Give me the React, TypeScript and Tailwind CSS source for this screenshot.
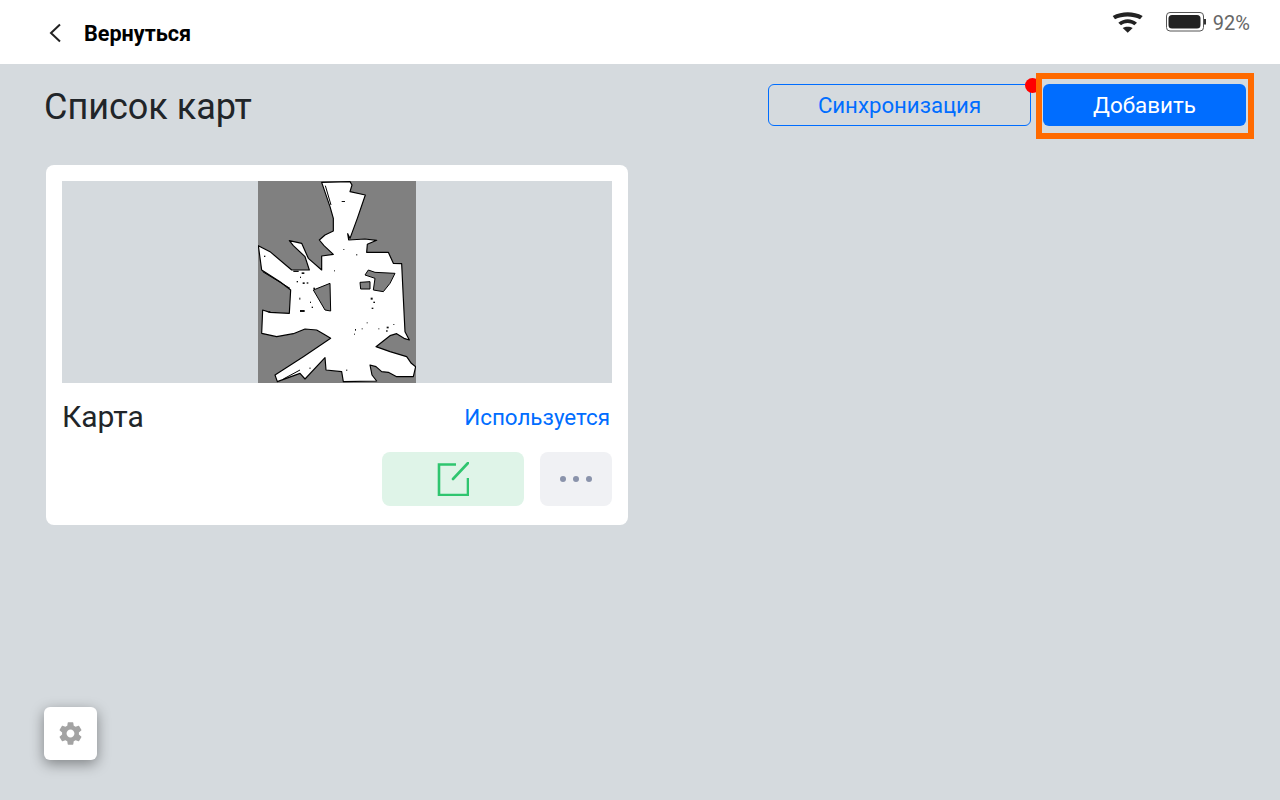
const font = { fontFamily: "Roboto, sans-serif" };

function WifiIcon() {
  return (
    <svg width="32" height="22" viewBox="0 0 32 22" fill="#222">
      <path d="M0.700 4C10 -0.900 21.500 -0.900 30.700 4L28 7.300C20.500 3.500 10.500 3.500 3 7.300Z" />
      <path d="M6.300 10.700C12 6 19.500 6 25 10.700L22.300 13.300C18 10.300 13.200 10.300 9 13.300Z" />
      <path d="M10.700 16C13.500 14.300 17.900 14.300 20.700 16L15.700 20.700Z" />
    </svg>
  );
}

function BatteryIcon() {
  return (
    <svg width="41" height="20" viewBox="0 0 41 20" fill="none">
      <rect x="0.500" y="0.500" width="37" height="18.500" rx="3.500" stroke="#555" />
      <rect x="2.500" y="3" width="32" height="13.500" rx="3.500" fill="#222" />
      <rect x="38" y="7" width="2" height="5.500" fill="#333" />
    </svg>
  );
}

function MapPreview() {
  const specks = [
    [275, 78, 10, 3], [318, 238, 4, 3], [280, 222, 3, 3], [252, 286, 3, 3], [148, 368, 3, 6],
    [158, 322, 6, 5], [170, 322, 5, 4], [130, 287, 16, 4], [155, 292, 8, 5], [150, 405, 14, 6],
    [180, 380, 3, 4], [185, 395, 4, 4], [362, 368, 6, 6], [370, 380, 5, 4], [365, 398, 5, 4],
    [350, 442, 3, 3], [315, 462, 3, 5], [335, 460, 3, 3], [410, 455, 6, 5], [430, 447, 3, 3],
    [408, 466, 5, 4], [312, 476, 3, 3], [385, 460, 3, 3], [178, 578, 4, 3], [288, 584, 4, 3],
    [55, 408, 6, 5], [42, 242, 4, 4], [190, 338, 5, 5], [140, 318, 4, 4], [150, 305, 3, 4],
  ];

  return (
    <svg width="158" height="202" viewBox="24 18 474 606" className="block">
      <rect x="24" y="18" width="474" height="606" fill="#808080" />
      <path
        d="M215 22L300 20L306 30L300 50L346 60L322 130L300 190L293 176L296 195L345 192L380 196L352 208L350 232L415 232L430 265L455 266L460 370L465 470L478 495L462 490L440 476L420 482L378 515L420 530L470 545L484 565L497 575L490 605L440 605L415 592L395 590L378 575L360 570L366 600L380 618L280 620L275 590L228 585L225 548L165 612L150 595L82 620L75 600L160 545L242 490L222 478L200 465L165 462L130 476L80 485L35 475L38 405L60 412L118 415L122 345L90 320L35 285L25 212L60 230L125 285L178 285L165 245L130 212L118 197L155 205L175 250L215 285L215 243L250 238L222 212L208 195L225 180L250 168L250 130L240 95Z"
        fill="#fff"
        stroke="#000"
        strokeWidth="3.500"
        strokeLinejoin="round"
      />
      <path d="M190 345L240 325L242 408L225 405Z" fill="#808080" stroke="#000" strokeWidth="3" />
      <path d="M355 285L375 292L435 295L420 325L400 350L370 345L375 310L345 300Z" fill="#808080" stroke="#000" strokeWidth="3" />
      <path d="M330 322L360 320L360 342L332 342Z" fill="#808080" stroke="#000" strokeWidth="3" />
      <path d="M38 290L120 340" stroke="#000" strokeWidth="3" />
      <path d="M100 612L150 585" stroke="#000" strokeWidth="3" />
      <path d="M226 32L243 90" stroke="#000" strokeWidth="3" />
      {specks.map(([x, y, w, h], i) => (
        <rect key={i} x={x} y={y} width={w} height={h} fill="#111" />
      ))}
    </svg>
  );
}

function MapCard() {
  return (
    <div className="ml-[2px] flex h-[360px] w-[582px] flex-col rounded-lg bg-white p-4">
      <div className="flex h-[202px] justify-center bg-[#d5dade]">
        <MapPreview />
      </div>
      <div className="mt-[14px] flex items-center justify-between pr-[2px]">
        <span className="text-[30px] leading-[40px] text-[#212529]">Карта</span>
        <span className="text-[22.4px] leading-[40px] text-[#006dff]">Используется</span>
      </div>
      <div className="mt-[15px] flex justify-end gap-4">
        <button className="flex h-[54px] w-[142px] items-center justify-center rounded-lg bg-[#dff4e8]">
          <svg width="32" height="34" viewBox="0 0 32 34" fill="none" stroke="#2fc56f" strokeWidth="2.600">
            <path d="M19 2.500H2V33H31V16" />
            <path d="M16 17L31 1" strokeLinecap="round" />
          </svg>
        </button>
        <button className="flex h-[54px] w-[72px] items-center justify-center gap-[7px] rounded-lg bg-[#f0f1f4]">
          <span className="size-[6px] rounded-full bg-[#8a93ab]" />
          <span className="size-[6px] rounded-full bg-[#8a93ab]" />
          <span className="size-[6px] rounded-full bg-[#8a93ab]" />
        </button>
      </div>
    </div>
  );
}

export default function App() {
  return (
    <div className="relative flex h-[800px] w-[1280px] flex-col overflow-hidden bg-[#d5dade]" style={font}>
      <header className="flex h-16 items-start justify-between bg-white pl-[49px] pr-[30px]">
        <div className="flex h-[66px] items-center">
          <svg width="12" height="20" viewBox="0 0 12 20" fill="none" stroke="#222" strokeWidth="2">
            <path d="M11 1.500L2 10L11 18.500" />
          </svg>
          <span className="ml-[23px] pt-[2px] text-[21.6px] font-bold text-black">Вернуться</span>
        </div>
        <div className="mt-3 flex items-start">
          <WifiIcon />
          <div className="ml-[22px]">
            <BatteryIcon />
          </div>
          <span className="ml-[6px] text-xl leading-[22px] text-[#666]">92%</span>
        </div>
      </header>

      <main className="flex flex-col pl-[44px] pr-[34px]">
        <div className="mt-5 flex h-[42px] items-center justify-between">
          <h1 className="pt-[3px] text-[36px] text-[#212529]">Список карт</h1>
          <div className="flex gap-3">
            <button className="h-[42px] w-[263px] rounded-md border border-[#006dff] pt-[2px] text-[22.2px] text-[#006dff]">
              Синхронизация
            </button>
            <button className="h-[42px] w-[203px] rounded-md bg-[#006dff] pt-[2px] text-[22.4px] text-white">Добавить</button>
          </div>
        </div>
        <div className="mt-[39px]">
          <MapCard />
        </div>
      </main>

      <span className="absolute left-[1025px] top-[78px] size-[15px] rounded-full bg-[#ff0000]" />
      <div className="absolute left-[1036px] top-[73px] h-[66px] w-[218px] border-[6px] border-[#ff6a00]" />

      <button className="absolute left-[44px] top-[707px] flex size-[53px] items-center justify-center rounded-md bg-white shadow-[0_4px_14px_rgba(0,0,0,0.4)]">
        <svg width="27" height="27" viewBox="0 0 24 24" fill="#a3a3a3">
          <path d="M19.430 12.980c.04-.32.07-.64.07-.98s-.03-.66-.07-.98l2.110-1.650c.19-.15.24-.42.12-.64l-2-3.460c-.12-.22-.39-.3-.61-.22l-2.490 1c-.52-.4-1.080-.73-1.690-.98l-.38-2.650C14.460 2.180 14.250 2 14 2h-4c-.25 0-.46.18-.49.42l-.38 2.650c-.61.25-1.170.59-1.690.98l-2.490-1c-.23-.09-.49 0-.61.22l-2 3.460c-.13.22-.07.49.12.64l2.110 1.650c-.04.32-.07.65-.07.98s.03.66.07.98l-2.110 1.650c-.19.15-.24.42-.12.64l2 3.460c.12.22.39.3.61.22l2.490-1c.52.4 1.080.73 1.690.98l.38 2.650c.03.24.24.42.49.42h4c.25 0 .46-.18.49-.42l.38-2.650c.61-.25 1.170-.59 1.690-.98l2.490 1c.23.09.49 0 .61-.22l2-3.460c.12-.22.07-.49-.12-.64l-2.110-1.650zM12 15.500c-1.930 0-3.500-1.570-3.500-3.500s1.570-3.500 3.500-3.500 3.500 1.570 3.500 3.500-1.570 3.500-3.500 3.500z" />
        </svg>
      </button>
    </div>
  );
}
